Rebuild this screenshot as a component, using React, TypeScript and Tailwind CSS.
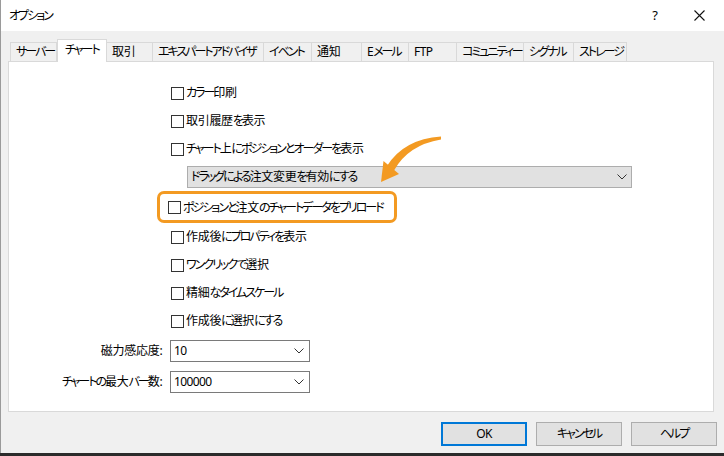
import React from "react";

const FONT = "font-['Noto_Sans','Noto_Sans_CJK_JP',sans-serif] [font-feature-settings:'palt']";

// Render Japanese text with narrower kana (to mimic Meiryo UI metrics)
function J({ t }: { t: string }) {
  const parts = t.match(/[\u3040-\u30ff]+|[\u4e00-\u9fff]+|[^\u3040-\u30ff\u4e00-\u9fff]+/g) || [];
  return (
    <span className="leading-none">
      {parts.map((p, i) => {
        if (/^[\u3040-\u30ff]/.test(p)) return <span key={i} className="tracking-[-2px]">{p}</span>;
        if (/^[\u4e00-\u9fff]/.test(p)) return <span key={i} className="tracking-[-0.3px]">{p}</span>;
        return <span key={i} className="tracking-[-0.6px]">{p}</span>;
      })}
    </span>
  );
}

const tabs: { label: string; w: number; sel?: boolean }[] = [
  { label: "サーバー", w: 47 },
  { label: "チャート", w: 50, sel: true },
  { label: "取引", w: 46 },
  { label: "エキスパートアドバイザ", w: 111 },
  { label: "イベント", w: 48 },
  { label: "通知", w: 50 },
  { label: "Eメール", w: 47 },
  { label: "FTP", w: 48 },
  { label: "コミュニティー", w: 67 },
  { label: "シグナル", w: 50 },
  { label: "ストレージ", w: 53 },
];

function Chevron() {
  return (
    <svg width="10" height="6" viewBox="0 0 10 6" className="shrink-0">
      <path d="M0.5 0.5 L5 5 L9.5 0.5" fill="none" stroke="#333" strokeWidth="1" />
    </svg>
  );
}

function Box() {
  return <div className="w-[13px] h-[13px] border border-[#333] bg-white shrink-0" />;
}

function Check({ label }: { label: string }) {
  return (
    <div className="h-[28px] flex items-center gap-[2px] pl-[14px]">
      <Box />
      <J t={label} />
    </div>
  );
}

function Select({ value }: { value: string }) {
  return (
    <div className="w-[140px] h-[22px] border border-[#7a7a7a] bg-white flex items-center justify-between pl-[3px] pr-[5px]">
      <J t={value} />
      <Chevron />
    </div>
  );
}

export default function App() {
  return (
    <div className={`relative w-[724px] h-[456px] bg-[#2b2b2b] overflow-hidden whitespace-nowrap text-[12px] text-black ${FONT}`}>
      <div className="h-[453px] bg-[#f0f0f0] border-l border-[#9a9a9a] flex flex-col">
        {/* title bar */}
        <div className="h-[31px] bg-white flex items-center pl-[8px] shrink-0">
          <J t="オプション" />
          <div className="flex-1" />
          <span className="leading-none text-[13px] mr-[36px]">?</span>
          <svg width="11" height="11" viewBox="0 0 11 11" className="mr-[19px]">
            <path d="M0.5 0.5 L10.5 10.5 M10.5 0.5 L0.5 10.5" stroke="#111" strokeWidth="1.1" />
          </svg>
        </div>

        {/* tabs */}
        <div className="mt-[8px] h-[23px] flex items-end pl-[9px] shrink-0">
          {tabs.map((t) =>
            t.sel ? (
              <div
                key={t.label}
                style={{ width: t.w }}
                className="relative z-10 h-[23px] bg-white border border-b-0 border-[#d9d9d9] flex items-center pl-[7px] pb-[2px]"
              >
                <J t={t.label} />
              </div>
            ) : (
              <div
                key={t.label}
                style={{ width: t.w }}
                className="h-[20px] bg-[#f0f0f0] border border-l-0 first:border-l border-[#d9d9d9] flex items-center pl-[5px]"
              >
                <J t={t.label} />
              </div>
            )
          )}
        </div>

        {/* panel */}
        <div className="relative -mt-[1px] ml-[7px] w-[706px] h-[351px] bg-white border border-[#d9d9d9] pt-[17px] pl-[148px] flex flex-col">
          <Check label="カラー印刷" />
          <Check label="取引履歴を表示" />
          <Check label="チャート上にポジションとオーダーを表示" />
          <div className="mt-[3px] ml-[30px] w-[445px] h-[22px] bg-[#e1e1e1] border border-[#adadad] flex items-center justify-between pl-[3px] pr-[4px]">
            <J t="ドラッグによる注文変更を有効にする" />
            <Chevron />
          </div>
          <div className="mt-[3px] w-[240px] h-[32px] border-[3px] border-[#f39a22] rounded-[7px] flex items-center gap-[2px] pl-[8px] pt-[1px]">
            <Box />
            <J t="ポジションと注文のチャートデータをプリロード" />
          </div>
          <Check label="作成後にプロパティを表示" />
          <Check label="ワンクリックで選択" />
          <Check label="精細なタイムスケール" />
          <Check label="作成後に選択にする" />
          <div className="-ml-[148px] mt-[5px] flex flex-col gap-[9px]">
            <div className="flex items-center gap-[8px]">
              <div className="w-[153px] text-right leading-none"><J t="磁力感応度:" /></div>
              <Select value="10" />
            </div>
            <div className="flex items-center gap-[8px]">
              <div className="w-[153px] text-right leading-none"><J t="チャートの最大バー数:" /></div>
              <Select value="100000" />
            </div>
          </div>
        </div>

        {/* buttons */}
        <div className="mt-[10px] flex justify-end gap-[9px] pr-[7px]">
          <div className="w-[86px] h-[24px] bg-[#e1e1e1] border-2 border-[#0078d7] flex items-center justify-center"><J t="OK" /></div>
          <div className="w-[86px] h-[24px] bg-[#e1e1e1] border border-[#adadad] flex items-center justify-center"><J t="キャンセル" /></div>
          <div className="w-[86px] h-[24px] bg-[#e1e1e1] border border-[#adadad] flex items-center justify-center"><J t="ヘルプ" /></div>
        </div>
      </div>

      {/* annotation arrow */}
      <svg className="absolute left-0 top-0 pointer-events-none" width="724" height="456" viewBox="0 0 724 456">
        <path d="M441 136.5 Q404 139 387 166 L394 170.5 Q408 145 441 139.5 Z" fill="#f39a22" />
        <path d="M381 182 L383.5 161 L399 174 Z" fill="#f39a22" />
      </svg>
    </div>
  );
}
